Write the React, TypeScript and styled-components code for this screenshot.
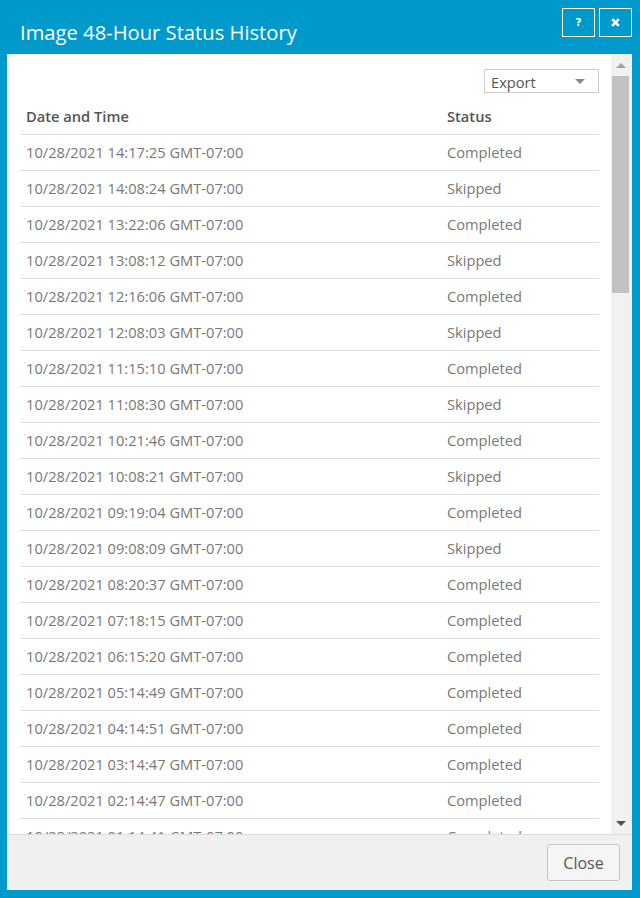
import React from "react";
import styled, { createGlobalStyle } from "styled-components";

const Global = createGlobalStyle`
  html, body { margin: 0; padding: 0; }
  body { font-family: "Open Sans", "Liberation Sans", sans-serif; background: #fff; }
  * { box-sizing: border-box; }
`;

const Dialog = styled.div`
  width: 640px;
  height: 898px;
  background: #0099cc;
  display: flex;
  flex-direction: column;
  overflow: hidden;
`;

const TitleBar = styled.div`
  height: 54px;
  flex: none;
  display: flex;
  align-items: flex-start;
  justify-content: space-between;
  padding: 8px 8px 0 20px;
`;

const Title = styled.h1`
  margin: 9px 0 0 0;
  font-size: 20.2px;
  font-weight: 400;
  color: #fff;
  line-height: 30px;
`;

const TitleButtons = styled.div`
  display: flex;
  gap: 4px;
`;

const TitleButton = styled.button`
  width: 33px;
  height: 29px;
  border: 1px solid #fff;
  background: transparent;
  color: #fff;
  display: flex;
  align-items: center;
  justify-content: center;
  padding: 0;
  font-family: "DejaVu Sans", sans-serif;
  font-weight: 700;
  font-size: 11px;
`;

const Body = styled.div`
  flex: 1;
  margin: 0 8px 8px 7px;
  display: flex;
  flex-direction: column;
  min-height: 0;
`;

const ContentRow = styled.div`
  flex: 1;
  display: flex;
  min-height: 0;
  background: #fff;
`;

const ScrollArea = styled.div`
  flex: 1;
  overflow: hidden;
  padding: 15px 12px 0 13px;
`;

const Toolbar = styled.div`
  display: flex;
  justify-content: flex-end;
  margin-bottom: 5px;
`;

const Select = styled.div`
  width: 115px;
  height: 24px;
  border: 1px solid #cccccc;
  display: flex;
  align-items: center;
  justify-content: space-between;
  padding: 1px 13px 0 6px;
  font-size: 14.67px;
  color: #555;
`;

const Caret = styled.span`
  width: 0;
  height: 0;
  border-left: 5px solid transparent;
  border-right: 5px solid transparent;
  border-top: 5px solid #888;
`;

const Table = styled.table`
  width: 100%;
  border-collapse: collapse;
  font-size: 14.67px;
`;

const Th = styled.th<{ $w?: number }>`
  text-align: left;
  font-weight: 600;
  color: #555;
  height: 36px;
  padding: 0 6px;
  border-bottom: 1px solid #dddddd;
  width: ${(p) => (p.$w ? `${p.$w}px` : "auto")};
`;

const Td = styled.td`
  color: #777;
  height: 36px;
  padding: 0 6px;
  border-bottom: 1px solid #dddddd;
  white-space: nowrap;
`;

const Scrollbar = styled.div`
  width: 21px;
  flex: none;
  background: #f1f1f1;
  display: flex;
  flex-direction: column;
  align-items: center;
  padding: 0 2px 0 0;
`;

const Arrow = styled.div<{ $down?: boolean }>`
  height: 22px;
  flex: none;
  display: flex;
  align-items: center;
  justify-content: center;
  &::before {
    content: "";
    width: 0;
    height: 0;
    border-left: 5px solid transparent;
    border-right: 5px solid transparent;
    ${(p) =>
      p.$down
        ? "border-top: 5px solid #505050;"
        : "border-bottom: 5px solid #a3a3a3;"}
  }
`;

const Track = styled.div`
  flex: 1;
  width: 17px;
`;

const Thumb = styled.div`
  width: 17px;
  height: 217px;
  background: #c1c1c1;
`;

const Footer = styled.div`
  height: 56px;
  flex: none;
  background: #f0f0f0;
  border-top: 1px solid #dddddd;
  display: flex;
  justify-content: flex-end;
  align-items: flex-start;
  padding: 9px 12px 0 0;
`;

const CloseButton = styled.button`
  width: 73px;
  height: 37px;
  border: 1px solid #c6c6c6;
  border-radius: 3px;
  background: #f5f5f5;
  color: #555;
  font-family: "Open Sans", "Liberation Sans", sans-serif;
  font-size: 16px;
  padding: 0;
`;

const rows: [string, string][] = [
  ["10/28/2021 14:17:25 GMT-07:00", "Completed"],
  ["10/28/2021 14:08:24 GMT-07:00", "Skipped"],
  ["10/28/2021 13:22:06 GMT-07:00", "Completed"],
  ["10/28/2021 13:08:12 GMT-07:00", "Skipped"],
  ["10/28/2021 12:16:06 GMT-07:00", "Completed"],
  ["10/28/2021 12:08:03 GMT-07:00", "Skipped"],
  ["10/28/2021 11:15:10 GMT-07:00", "Completed"],
  ["10/28/2021 11:08:30 GMT-07:00", "Skipped"],
  ["10/28/2021 10:21:46 GMT-07:00", "Completed"],
  ["10/28/2021 10:08:21 GMT-07:00", "Skipped"],
  ["10/28/2021 09:19:04 GMT-07:00", "Completed"],
  ["10/28/2021 09:08:09 GMT-07:00", "Skipped"],
  ["10/28/2021 08:20:37 GMT-07:00", "Completed"],
  ["10/28/2021 07:18:15 GMT-07:00", "Completed"],
  ["10/28/2021 06:15:20 GMT-07:00", "Completed"],
  ["10/28/2021 05:14:49 GMT-07:00", "Completed"],
  ["10/28/2021 04:14:51 GMT-07:00", "Completed"],
  ["10/28/2021 03:14:47 GMT-07:00", "Completed"],
  ["10/28/2021 02:14:47 GMT-07:00", "Completed"],
  ["10/28/2021 01:14:41 GMT-07:00", "Completed"],
  ["10/28/2021 00:14:38 GMT-07:00", "Completed"],
  ["10/27/2021 23:14:52 GMT-07:00", "Completed"],
];

export default function App() {
  return (
    <>
      <Global />
      <Dialog>
        <TitleBar>
          <Title>Image 48-Hour Status History</Title>
          <TitleButtons>
            <TitleButton aria-label="Help">?</TitleButton>
            <TitleButton aria-label="Close">
              <svg width="9" height="9" viewBox="0 0 9 9">
                <path d="M1.2 1.2 L7.8 7.8 M7.8 1.2 L1.2 7.8" stroke="#fff" strokeWidth="2.6" />
              </svg>
            </TitleButton>
          </TitleButtons>
        </TitleBar>
        <Body>
          <ContentRow>
            <ScrollArea>
              <Toolbar>
                <Select>
                  <span>Export</span>
                  <Caret />
                </Select>
              </Toolbar>
              <Table>
                <thead>
                  <tr>
                    <Th $w={421}>Date and Time</Th>
                    <Th>Status</Th>
                  </tr>
                </thead>
                <tbody>
                  {rows.map(([d, s]) => (
                    <tr key={d}>
                      <Td>{d}</Td>
                      <Td>{s}</Td>
                    </tr>
                  ))}
                </tbody>
              </Table>
            </ScrollArea>
            <Scrollbar>
              <Arrow />
              <Track>
                <Thumb />
              </Track>
              <Arrow $down />
            </Scrollbar>
          </ContentRow>
          <Footer>
            <CloseButton>Close</CloseButton>
          </Footer>
        </Body>
      </Dialog>
    </>
  );
}
